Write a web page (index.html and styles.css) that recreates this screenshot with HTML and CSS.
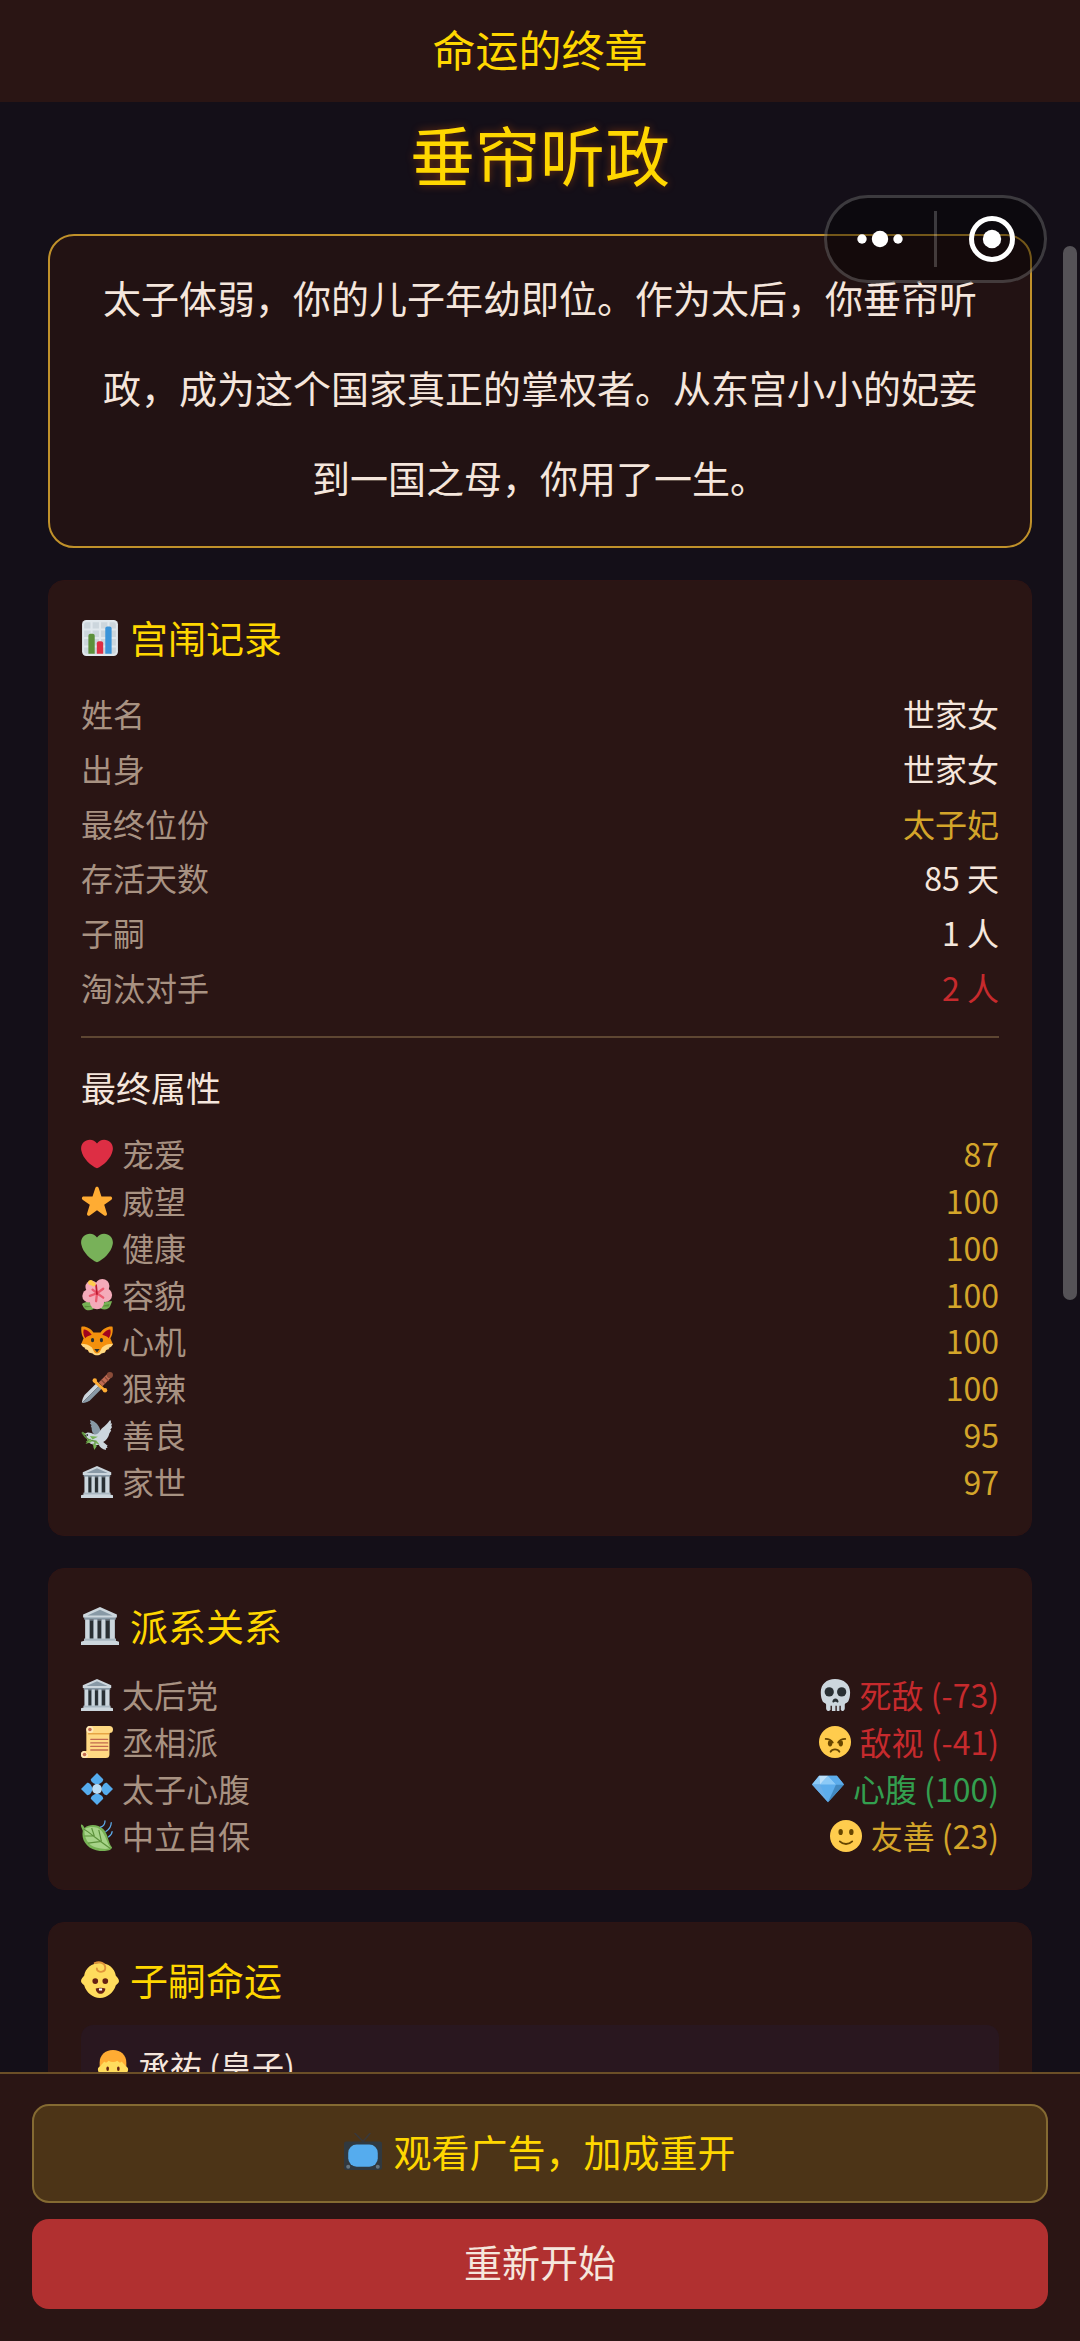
FILE: index.html
```html
<!DOCTYPE html>
<html lang="zh-CN">
<head>
<meta charset="utf-8">
<meta name="viewport" content="width=device-width, initial-scale=1">
<title>命运的终章</title>
<link rel="stylesheet" href="styles.css">
</head>
<body>
<svg class="sprite" aria-hidden="true">
  <symbol id="chart" viewBox="0 0 36 36"><rect x="1" y="1" width="34" height="34" rx="4" fill="#e1e8ed"/><path fill="#ccd6dd" d="M5 3h4v6H3V5a2 2 0 0 1 2-2zM11 3h6v6h-6zM19 3h6v6h-6zM27 3h4a2 2 0 0 1 2 2v4h-6zM3 11h6v6H3zM11 11h6v6h-6zM19 11h6v6h-6zM27 11h6v6h-6zM3 19h6v6H3zM11 19h6v6h-6zM19 19h6v6h-6zM27 19h6v6h-6zM3 27h6v6H5a2 2 0 0 1-2-2zM11 27h6v6h-6zM19 27h6v6h-6zM27 27h6v4a2 2 0 0 1-2 2h-4z"/><path fill="#5c913b" d="M13 33H7V16c0-1.104.896-2 2-2h2c1.104 0 2 .896 2 2z"/><path fill="#3b94d9" d="M29 33h-6V9c0-1.104.896-2 2-2h2c1.104 0 2 .896 2 2z"/><path fill="#dd2e44" d="M21 33h-6V23c0-1.104.896-2 2-2h2c1.104 0 2 .896 2 2z"/></symbol>
  <symbol id="heart" viewBox="0 0 36 36"><path fill="currentColor" d="M35.885 11.833c0-5.45-4.418-9.868-9.867-9.868-3.308 0-6.227 1.633-8.018 4.129-1.791-2.496-4.71-4.129-8.017-4.129-5.45 0-9.868 4.417-9.868 9.868 0 .772.098 1.52.266 2.241C1.751 22.587 11.216 31.568 18 34.034c6.783-2.466 16.249-11.447 17.617-19.959.17-.721.268-1.469.268-2.242z"/></symbol>
  <symbol id="star" viewBox="0 0 36 36"><path fill="#ffac33" d="M27.287 34.627c-.404 0-.806-.124-1.152-.371L18 28.422l-8.135 5.834c-.343.247-.748.371-1.151.371-.405 0-.81-.125-1.157-.375-.687-.499-.977-1.385-.721-2.194l3.034-9.792-8.062-5.681c-.685-.505-.97-1.393-.708-2.203.264-.81 1.016-1.363 1.868-1.372L12.947 13l3.179-9.649c.268-.809 1.023-1.353 1.874-1.353.851 0 1.606.545 1.875 1.353L23 13l10.036.015c.853.009 1.606.562 1.87 1.372.264.81-.022 1.697-.708 2.203l-8.062 5.681 3.034 9.792c.259.809-.033 1.694-.721 2.194-.347.247-.755.37-1.162.37z"/></symbol>
  <symbol id="flower" viewBox="0 0 36 36"><path fill="#77b255" d="M1 28c5-3 10-3 16 2-3 6-11 7-14 2l-2-4zM35 25c-6 0-11 1-16 6 5 5 12 4 14-1l2-5z"/><path fill="#5c913b" d="M4 30l10 1-10 1zM32 28l-11 3 10 0z"/><g fill="#f4abba"><circle cx="12" cy="9" r="7"/><circle cx="24" cy="8" r="8"/><circle cx="27" cy="18" r="8"/><circle cx="18" cy="26" r="8"/><circle cx="9" cy="19" r="7.500"/><circle cx="18" cy="16" r="9"/></g><path d="M18 16l-5-4M18 16l7-5M18 16l7 5M18 16l-1 9M18 16l-8 3" fill="none" stroke="#ea596e" stroke-width="2.600" stroke-linecap="round"/><path d="M18 17l-1-10" stroke="#be1931" stroke-width="2" stroke-linecap="round"/><circle cx="11" cy="4" r="3" fill="#ffcc4d"/><circle cx="14" cy="6" r="2.500" fill="#ffcc4d"/></symbol>
  <symbol id="fox" viewBox="0 0 36 36"><path fill="#f4900c" d="M.5 2C5 1 11 4 14 8.500h8C25 4 31 1 35.500 2c.8 5-.5 10-2.500 13l3 7-5 3-4 5-5 1-4 3-4-3-5-1-4-5-5-3 3-7C1 12-.3 7 .5 2z"/><path fill="#a0041e" d="M3 5c4 0 7 3 9 6-3 1-6 2-7 4-2-3-3-6-2-10zM33 5c-4 0-7 3-9 6 3 1 6 2 7 4 2-3 3-6 2-10z"/><path fill="#ffd983" d="M0 21c5 0 9 1 12 4 2 2 2 7 6 7s4-5 6-7c3-3 7-4 12-4-1 3-3 4-5 5l1 1-4 1-1 3-4 1c-2 2-3 2-5 2s-3 0-5-2l-4-1-1-3-4-1 1-1c-2-1-4-2-5-5z"/><ellipse cx="13" cy="17" rx="1.800" ry="2.500" fill="#292f33"/><ellipse cx="23" cy="17" rx="1.800" ry="2.500" fill="#292f33"/><path fill="#292f33" d="M15 27h6l-3 4z"/></symbol>
  <symbol id="dagger" viewBox="0 0 36 36"><path fill="#ccd6dd" d="M18 12L4 26C2 29 1 33 1 35l20-20z"/><path fill="#8899a6" d="M21 15L1 35c2 0 6-1 9-3l14-14z"/><path d="M22 14l9-9" stroke="#bf6952" stroke-width="6"/><path d="M23 9l4 4M27 6l4 4" stroke="#8a4b38" stroke-width="1.500"/><circle cx="32.500" cy="3.500" r="3.500" fill="#8a4b38"/><path d="M15.500 10.500l11 10" stroke="#ffac33" stroke-width="3.200"/><circle cx="15.500" cy="9.500" r="2.500" fill="#ffac33"/><circle cx="27" cy="20.500" r="2.500" fill="#ffac33"/></symbol>
  <symbol id="dove" viewBox="0 0 36 36"><path fill="#8899a6" d="M10 1c6 1 11 6 12 13l-4 5c-5-2-6-5-6-9l-1-2 1-1-2-2 1-1z"/><path fill="#ccd6dd" d="M4 17c3-3 7-2 10 0 3 1 5 0 7-3 3-5 7-6 11-12l1-1c1 2 1 3 0 4l2 0-1 3 1 1-2 3 1 1-2 3c-1 5-4 8-7 10l5 4-1 1 1 1-2 1v2c-4-1-7-3-8-6-7 1-12-2-13-6l-1-4-2-2z"/><path d="M1 15c5 8 8 9 15 10l-1 8M10 23l-4 3" fill="none" stroke="#5c913b" stroke-width="1.600"/><path fill="#77b255" d="M1 14l5 3-2 1zM10 19l9 1-6 3zM5 28l6-6 1 4zM13 27l5 3-3 5zM17 24l4 5-5-2z"/><circle cx="7" cy="18" r="1" fill="#292f33"/></symbol>
  <symbol id="hall" viewBox="0 0 36 36"><path fill="#66757f" d="M4 12h28v19H4z"/><path fill="#292f33" d="M8.500 13h3v17h-3zM15.500 13h3.500v17h-3.500zM23.500 13h3.500v17h-3.500z"/><path fill="#ccd6dd" d="M4 11h4v20H4zM12 11h3.500v20H12zM19.500 11H23v20h-3.500zM27.500 11H32v20h-4.500z"/><path fill="#8899a6" d="M3 9h30v3H3z"/><path fill="#ccd6dd" d="M18 0L2 7v3h32V7z"/><path fill="#8899a6" d="M18 2.500L6 8h24z"/><path fill="#ccd6dd" d="M3 30h30v2l3 1v3H0v-3l3-1z"/><path fill="#aab8c2" d="M3 30h30v2H3z"/></symbol>
  <symbol id="scroll" viewBox="0 0 36 36"><path fill="#ffd983" d="M32 0H10a4 4 0 0 0-4 4v24H4a4 4 0 0 0 0 8h24a4 4 0 0 0 4-4V8a4 4 0 0 0 0-8z"/><path fill="#e39f3d" d="M8 8h24v1.500H8z"/><circle cx="10" cy="4" r="4" fill="#ffe8b6"/><circle cx="10" cy="4" r="2" fill="#c1694f"/><path fill="#ffe8b6" d="M8 32a4 4 0 1 1-4-4z"/><circle cx="4" cy="32" r="2" fill="#c1694f"/><path d="M11 15h19M11 19h19M11 23h19M11 27h19" stroke="#c1694f" stroke-width="1.500" stroke-linecap="round"/></symbol>
  <symbol id="gemflower" viewBox="0 0 36 36"><g fill="#55acee"><path d="M18 0l7 7c0 3-3 5-7 6-4-1-7-3-7-6z"/><path d="M18 36l7-7c0-3-3-5-7-6-4 1-7 3-7 6z"/><path d="M0 18l7-7c3 0 5 3 6 7-1 4-3 7-6 7z"/><path d="M36 18l-7-7c-3 0-5 3-6 7 1 4 3 7 6 7z"/></g><circle cx="18" cy="18" r="5.500" fill="#bbddf5"/></symbol>
  <symbol id="leaf" viewBox="0 0 36 36"><path fill="#77b255" d="M0 5c2 0 3 2 4 4 6-5 15-4 21 1 6 6 5 15 10 21-1 4-10 5-18 3C6 31 0 22 2 12L0 7z"/><path fill="#a6d388" d="M4 10c7-3 14-3 19 2 5 6 6 13 10 19-1 2-9 2-16 0C8 28 3 20 4 10z"/><path d="M3 10c9 6 18 14 30 22M12 9l3 9M20 11l3 13M4 18l11 0M8 26l15-2" fill="none" stroke="#5c913b" stroke-width="1.300"/><path d="M27 1c0 4-2 6-5 7M34 3c0 5-3 8-6 10M35 13c0 3-1 4-4 6" fill="none" stroke="#5dadec" stroke-width="1.400" stroke-linecap="round"/></symbol>
  <symbol id="skull" viewBox="0 0 36 36"><path fill="#ccd6dd" d="M18 0C8.500 0 2 6 2 15c0 5 1 8 2 10 1 2 4 2 4 4v4c0 3 3 4 5 2v-5h1.500v6h4v-6H20v6h3v-6h1.500v5c1.500 2 4.500 1 4.500-2v-4c0-2 3-2 4-4 1-2 2-5 2-10 0-9-7-15-17-15z"/><circle cx="11.500" cy="14.500" r="5.200" fill="#292f33"/><circle cx="25.500" cy="14.500" r="5.200" fill="#292f33"/><path fill="#292f33" d="M15 26c0-2 1.500-4 3.500-4s3.500 2 3.500 4c-1 1-2-.5-3.500-.5S16 27 15 26z"/></symbol>
  <symbol id="angry" viewBox="0 0 36 36"><circle cx="18" cy="18" r="18" fill="#ffcc4d"/><g fill="#664500"><ellipse cx="12.500" cy="19.500" rx="2.500" ry="3.500"/><ellipse cx="24.500" cy="19.500" rx="2.500" ry="3.500"/></g><path d="M7.500 14.500c3 0 6 1 8 4M29.500 14.500c-3 0-6 1-8 4M13 29c2-3.500 8-3.500 10 0" fill="none" stroke="#664500" stroke-width="2" stroke-linecap="round"/></symbol>
  <symbol id="gem" viewBox="0 0 36 36"><path fill="#5dadec" d="M8 3h20l8 10-18 20L0 13z"/><path fill="#8ccaf7" d="M8 3L0 13h9zM18 3l-9 10h18z"/><path fill="#bde0fa" d="M8 3h10L9 13z"/><path fill="#4289c1" d="M27 13h9L18 33z"/><path fill="#6aaee8" d="M0 13h9l9 20z"/><path fill="#5dadec" d="M28 3h-10l9 10zM28 3l8 10h-9z"/></symbol>
  <symbol id="smile" viewBox="0 0 36 36"><circle cx="18" cy="18" r="18" fill="#ffcc4d"/><g fill="#664500"><ellipse cx="12" cy="13.500" rx="2.500" ry="3.500"/><ellipse cx="24" cy="13.500" rx="2.500" ry="3.500"/></g><path d="M11 24c4 4 10 4 14 0" fill="none" stroke="#664500" stroke-width="2" stroke-linecap="round"/></symbol>
  <symbol id="baby" viewBox="0 0 36 36"><path fill="#ffdc5d" d="M18 2C10 2 4 7 3 14c-1 1-3 3-3 5 0 1.500 1.500 3 3 4 2 7 8 12 15 12s13-5 15-12c1.500-1 3-2.500 3-4 0-2-2-4-3-5C32 7 26 2 18 2z"/><path d="M13 2c5-2 10 0 10 4.500 0 5-8 5-8 .5" fill="none" stroke="#e2963b" stroke-width="1.800" stroke-linecap="round"/><circle cx="13.500" cy="19" r="2.700" fill="#662113"/><circle cx="23" cy="19" r="2.700" fill="#662113"/><path fill="#662113" d="M14 26c3-1 6-1 9 0 0 3-2 5-4.500 5S14 29 14 26z"/><path fill="#fff" d="M17 26h3v2h-3z"/></symbol>
  <symbol id="boy" viewBox="0 0 36 36"><path fill="#ffac33" d="M18 0C9 0 3 6 3 14v6h30v-6C33 6 27 0 18 0z"/><path fill="#ffdc5d" d="M4 18c1-2 3-3 4-5 2 2 3 1 5-1 3 2 7 2 10 0 2 2 3 3 5 1 1 2 3 3 4 5 2 1 3 2 3 4s-1 4-3 4c-2 6-8 9-14 9S6 32 4 26c-2 0-3-2-3-4s1-3 3-4z"/><ellipse cx="12" cy="21" rx="1.500" ry="2.500" fill="#662113"/><ellipse cx="24" cy="21" rx="1.500" ry="2.500" fill="#662113"/><path d="M16 26h4" stroke="#c1694f" stroke-width="2"/></symbol>
  <symbol id="tv" viewBox="0 0 36 36"><path d="M10 0l8 8 7-8" fill="none" stroke="#3b3838" stroke-width="1.600"/><rect x="0" y="8" width="36" height="27" rx="2" fill="#31393f"/><rect x="4" y="11" width="28" height="21" rx="8" fill="#55acee"/><circle cx="4" cy="32" r="1.900" fill="#66757f"/><circle cx="32" cy="32" r="1.900" fill="#66757f"/></symbol>
</svg>

<div class="app">
  <header class="topbar">命运的终章</header>

  <main class="content">
    <h1 class="ending-title">垂帘听政</h1>
    <p class="story">太子体弱，你的儿子年幼即位。作为太后，你垂帘听政，成为这个国家真正的掌权者。从东宫小小的妃妾到一国之母，你用了一生。</p>

    <section class="card">
      <h2 class="card-title"><svg class="icon-lg"><use href="#chart"/></svg>宫闱记录</h2>
      <dl class="records">
        <div class="row"><dt>姓名</dt><dd>世家女</dd></div>
        <div class="row"><dt>出身</dt><dd>世家女</dd></div>
        <div class="row"><dt>最终位份</dt><dd class="gold">太子妃</dd></div>
        <div class="row"><dt>存活天数</dt><dd>85 天</dd></div>
        <div class="row"><dt>子嗣</dt><dd>1 人</dd></div>
        <div class="row"><dt>淘汰对手</dt><dd class="red">2 人</dd></div>
      </dl>
      <h3 class="sub-title">最终属性</h3>
      <dl class="stats">
        <div class="row"><dt><svg class="icon heart-red"><use href="#heart"/></svg>宠爱</dt><dd class="gold">87</dd></div>
        <div class="row"><dt><svg class="icon"><use href="#star"/></svg>威望</dt><dd class="gold">100</dd></div>
        <div class="row"><dt><svg class="icon heart-green"><use href="#heart"/></svg>健康</dt><dd class="gold">100</dd></div>
        <div class="row"><dt><svg class="icon"><use href="#flower"/></svg>容貌</dt><dd class="gold">100</dd></div>
        <div class="row"><dt><svg class="icon"><use href="#fox"/></svg>心机</dt><dd class="gold">100</dd></div>
        <div class="row"><dt><svg class="icon"><use href="#dagger"/></svg>狠辣</dt><dd class="gold">100</dd></div>
        <div class="row"><dt><svg class="icon"><use href="#dove"/></svg>善良</dt><dd class="gold">95</dd></div>
        <div class="row"><dt><svg class="icon"><use href="#hall"/></svg>家世</dt><dd class="gold">97</dd></div>
      </dl>
    </section>

    <section class="card">
      <h2 class="card-title"><svg class="icon-lg"><use href="#hall"/></svg>派系关系</h2>
      <dl class="factions">
        <div class="row"><dt><svg class="icon"><use href="#hall"/></svg>太后党</dt><dd class="red"><svg class="icon"><use href="#skull"/></svg>死敌 (-73)</dd></div>
        <div class="row"><dt><svg class="icon"><use href="#scroll"/></svg>丞相派</dt><dd class="red"><svg class="icon"><use href="#angry"/></svg>敌视 (-41)</dd></div>
        <div class="row"><dt><svg class="icon"><use href="#gemflower"/></svg>太子心腹</dt><dd class="green"><svg class="icon"><use href="#gem"/></svg>心腹 (100)</dd></div>
        <div class="row"><dt><svg class="icon"><use href="#leaf"/></svg>中立自保</dt><dd class="gold"><svg class="icon"><use href="#smile"/></svg>友善 (23)</dd></div>
      </dl>
    </section>

    <section class="card">
      <h2 class="card-title"><svg class="icon-lg"><use href="#baby"/></svg>子嗣命运</h2>
      <div class="child"><svg class="icon"><use href="#boy"/></svg>承祐 (皇子)</div>
    </section>
  </main>

  <footer class="actions">
    <button class="btn btn-ad" type="button"><svg class="icon-lg"><use href="#tv"/></svg>观看广告，加成重开</button>
    <button class="btn btn-restart" type="button">重新开始</button>
  </footer>

  <div class="capsule">
    <button class="capsule-btn capsule-more" type="button" aria-label="更多"><svg width="48" height="18" viewBox="0 0 48 18" fill="#fff"><circle cx="6" cy="9" r="4.700"/><circle cx="24" cy="9" r="8.200"/><circle cx="42" cy="9" r="4.700"/></svg></button>
    <button class="capsule-btn capsule-close" type="button" aria-label="关闭"><svg width="46" height="46" viewBox="0 0 46 46"><circle cx="23" cy="23" r="20.500" fill="none" stroke="#fff" stroke-width="5"/><circle cx="23" cy="23" r="9.200" fill="#fff"/></svg></button>
  </div>
  <div class="scroll-thumb"></div>
</div>
</body>
</html>
```
FILE: styles.css
```css
* {
  box-sizing: border-box;
}

body,
h1,
h2,
h3,
p,
dl,
dd {
  margin: 0;
  font-weight: 400;
}

body {
  background: #140f18;
  color: #f5e6dc;
  font-family: "Noto Sans CJK SC", sans-serif;
  font-size: 32px;
  line-height: 46px;
}

.sprite {
  display: none;
}

.app {
  position: relative;
  display: flex;
  flex-direction: column;
  height: 100vh;
}

.topbar {
  flex: none;
  padding: 16px 32px 22px;
  background: #2a1514;
  color: #ffd700;
  font-size: 43px;
  line-height: 64px;
  text-align: center;
}

.content {
  flex: 1;
  min-height: 0;
  overflow-y: auto;
  scrollbar-width: none;
  padding: 6px 48px 32px;
}

.ending-title {
  margin-bottom: 36px;
  color: #ffd700;
  font-size: 65px;
  line-height: 90px;
  text-align: center;
  text-shadow: 0 0 8px rgba(255, 100, 0, 0.4);
}

.story {
  padding: 16px 40px 24px;
  border: 2px solid #c0912a;
  border-radius: 26px;
  background: #221213;
  font-size: 38px;
  line-height: 90px;
  text-align: center;
}

.card {
  margin-top: 32px;
  padding: 29px 32px 31px;
  border: 1px solid #2d1414;
  border-radius: 16px;
  background: #2a1514;
}

.card-title {
  display: flex;
  align-items: center;
  gap: 11px;
  margin-bottom: 19px;
  color: #ffd700;
  font-size: 38px;
  line-height: 54px;
}

.icon,
.icon-lg {
  flex: none;
  width: 32px;
  height: 32px;
  margin-top: 2px;
}

.icon-lg {
  width: 38px;
  height: 38px;
}

.heart-red {
  color: #dd2e44;
}

.heart-green {
  color: #78b159;
}

.records,
.stats,
.factions {
  display: grid;
  align-content: space-between;
}

.records {
  min-height: 331px;
  margin-bottom: 22px;
  padding-top: 3px;
}

.stats {
  min-height: 374px;
}

.factions {
  min-height: 187px;
}

.records .row {
  padding: 4px 0;
}

.row {
  display: flex;
  justify-content: space-between;
}

.row dt,
.row dd {
  display: flex;
  align-items: center;
  gap: 9px;
}

.row dt {
  color: #a89282;
}

.row .gold {
  color: #d4a52a;
}

.row .red {
  color: #c62a2d;
}

.row .green {
  color: #339f4f;
}

.sub-title {
  padding: 24px 0 18px;
  border-top: 2px solid #5e4632;
  font-size: 35px;
  line-height: 50px;
}

.child {
  display: flex;
  align-items: center;
  gap: 9px;
  padding: 17px 16px;
  border-radius: 12px;
  background: #29171f;
}

.actions {
  flex: none;
  display: flex;
  flex-direction: column;
  gap: 16px;
  padding: 30px 32px 32px;
  border-top: 2px solid #6b4f27;
  background: #2a1514;
}

.btn {
  display: flex;
  align-items: center;
  justify-content: center;
  gap: 11px;
  padding: 15px 32px 21px;
  border: 0;
  border-radius: 17px;
  font: inherit;
  font-size: 38px;
  line-height: 54px;
}

.btn-ad {
  min-height: 99px;
  border: 2px solid #846a32;
  background: #4c3417;
  color: #ffd700;
}

.btn-restart {
  background: #b13030;
  color: #f5e6dc;
}

.capsule {
  position: absolute;
  top: 195px;
  right: 33px;
  display: flex;
  width: 223px;
  height: 88px;
  border: 3px solid rgba(255, 255, 255, 0.2);
  border-radius: 44px;
  background: rgba(0, 0, 0, 0.4);
}

.capsule-btn {
  display: flex;
  align-items: center;
  padding: 0;
  border: 0;
  background: none;
}

.capsule-more {
  padding: 0 30px 0 29px;
}

.capsule-close {
  flex: 1;
  gap: 32px;
}

.capsule-close::before {
  content: "";
  width: 3px;
  height: 56px;
  background: rgba(255, 255, 255, 0.2);
}

.scroll-thumb {
  position: absolute;
  top: 246px;
  right: 3px;
  width: 14px;
  height: 1054px;
  border-radius: 7px;
  background: #555257;
}
```
